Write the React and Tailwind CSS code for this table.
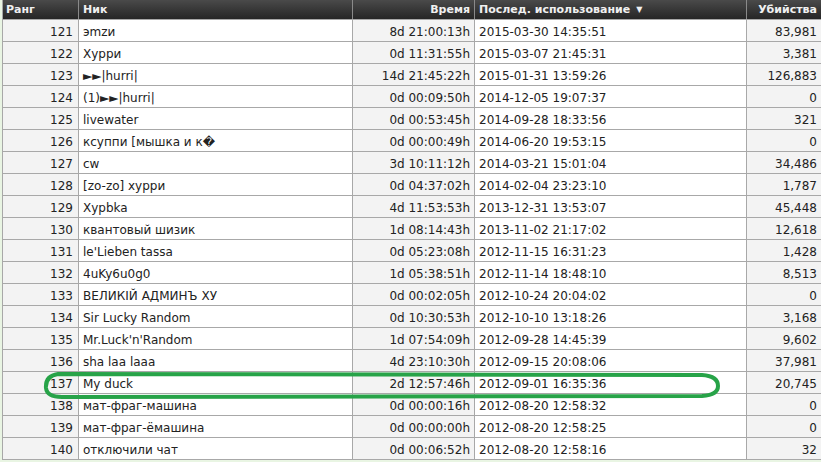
import React from 'react'

const rows = [
  ['121', 'эmzи', '8d 21:00:13h', '2015-03-30 14:35:51', '83,981'],
  ['122', 'Xурри', '0d 11:31:55h', '2015-03-07 21:45:31', '3,381'],
  ['123', '►►|hurri|', '14d 21:45:22h', '2015-01-31 13:59:26', '126,883'],
  ['124', '(1)►►|hurri|', '0d 00:09:50h', '2014-12-05 19:07:37', '0'],
  ['125', 'livewater', '0d 00:53:45h', '2014-09-28 18:33:56', '321'],
  ['126', 'ксуппи [мышка и к\uFFFD', '0d 00:00:49h', '2014-06-20 19:53:15', '0'],
  ['127', 'cw', '3d 10:11:12h', '2014-03-21 15:01:04', '34,486'],
  ['128', '[zo-zo] хурри', '0d 04:37:02h', '2014-02-04 23:23:10', '1,787'],
  ['129', 'Xypbka', '4d 11:53:53h', '2013-12-31 13:53:07', '45,448'],
  ['130', 'квантовый шизик', '1d 08:14:43h', '2013-11-02 21:17:02', '12,618'],
  ['131', "le'Lieben tassa", '0d 05:23:08h', '2012-11-15 16:31:23', '1,428'],
  ['132', '4uKy6u0g0', '1d 05:38:51h', '2012-11-14 18:48:10', '8,513'],
  ['133', 'ВЕЛИКIЙ АДМИНЪ ХУ', '0d 00:02:05h', '2012-10-24 20:04:02', '0'],
  ['134', 'Sir Lucky Random', '0d 10:30:53h', '2012-10-10 13:18:26', '3,168'],
  ['135', "Mr.Luck'n'Random", '1d 07:54:09h', '2012-09-28 14:45:39', '9,602'],
  ['136', 'sha laa laaa', '4d 23:10:30h', '2012-09-15 20:08:06', '37,981'],
  ['137', 'My duck', '2d 12:57:46h', '2012-09-01 16:35:36', '20,745'],
  ['138', 'мат-фраг-машина', '0d 00:00:16h', '2012-08-20 12:58:32', '0'],
  ['139', 'мат-фраг-ёмашина', '0d 00:00:00h', '2012-08-20 12:58:25', '0'],
  ['140', 'отключили чат', '0d 00:06:52h', '2012-08-20 12:58:16', '32'],
]

export default function App() {
  return (
    <div className="relative w-[821px] h-[462px] overflow-hidden bg-[#e9f5e3] pl-[2px]" style={{ fontFamily: '"DejaVu Sans", Verdana, sans-serif' }}>
      <div className="border-l border-b border-[#a8a8a8] bg-white">
        <div className="flex h-[19px] bg-gradient-to-b from-[#4a4a4a] to-[#262626] text-[#f0f0f0] text-[11px] font-bold leading-[19px]">
          <div className="w-[76px] pl-[3px] border-r border-[#8a8a8a]">Ранг</div>
          <div className="w-[274px] pl-[4px] border-r border-[#8a8a8a]">Ник</div>
          <div className="w-[122px] pr-[4px] text-right border-r border-[#8a8a8a]">Время</div>
          <div className="w-[272px] pl-[4px] border-r border-[#8a8a8a] flex items-center">
            Послед. использование
            <span className="ml-[6px] text-[8px]">▼</span>
          </div>
          <div className="flex-1 pr-[4px] text-right">Убийства</div>
        </div>
        {rows.map((r) => (
          <div key={r[0]} className="flex h-[22px] border-t border-[#a8a8a8] text-[12px] text-[#222] leading-[18px]">
            <div className="w-[76px] pt-[3px] pr-[5px] text-right bg-[#f3f3f3] border-r border-[#a8a8a8]">{r[0]}</div>
            <div className="w-[274px] pt-[3px] pl-[4px] bg-white border-r border-[#a8a8a8] whitespace-nowrap overflow-hidden">{r[1]}</div>
            <div className="w-[122px] pt-[3px] pr-[4px] text-right bg-[#f3f3f3] border-r border-[#a8a8a8]">{r[2]}</div>
            <div className="w-[272px] pt-[3px] pl-[4px] bg-white border-r border-[#a8a8a8]">{r[3]}</div>
            <div className="flex-1 pt-[3px] pr-[4px] text-right bg-[#f3f3f3]">{r[4]}</div>
          </div>
        ))}
      </div>
      <svg className="absolute left-0 top-0 pointer-events-none" width="821" height="462">
        <path
          d="M58 374 L702 375 Q718 376 718 386 Q718 395 702 396 L62 397 Q47 397 46 388 Q45 376 58 374 Z"
          fill="none"
          stroke="#27a348"
          strokeWidth="4"
        />
      </svg>
    </div>
  )
}
